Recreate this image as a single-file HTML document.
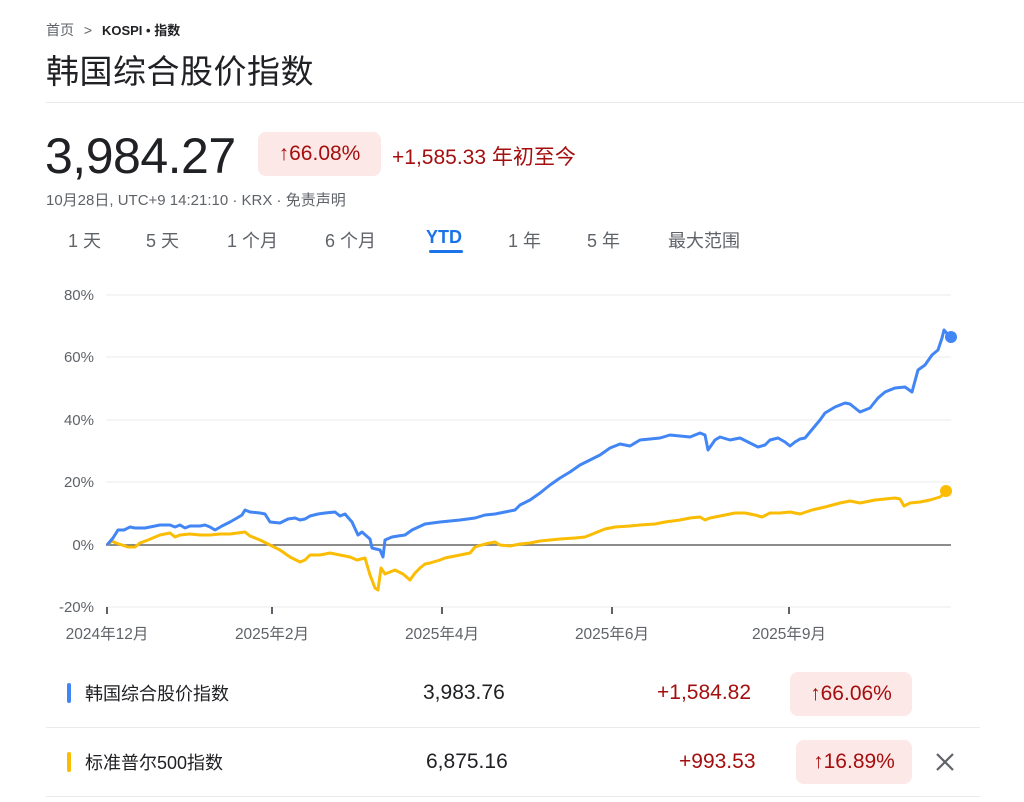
<!DOCTYPE html>
<html><head><meta charset="utf-8"><style>
*{margin:0;padding:0;box-sizing:border-box}
body{width:1024px;height:802px;background:#fff;position:relative;overflow:hidden;font-family:"Liberation Sans","Noto Sans CJK SC",sans-serif;color:#202124}
.a{position:absolute;white-space:nowrap}
.red{color:#a50e0e}
.pill{background:#fce8e6;border-radius:8px;color:#a50e0e}
.tab{position:absolute;top:227px;font-size:18px;color:#5f6368}
.hr{position:absolute;height:1px;background:#e8eaed}
</style></head><body>
<div class="a" style="left:46px;top:20px;font-size:14px;color:#5f6368">首页 <span style="margin:0 6px">&gt;</span> <b style="color:#202124;font-size:13px">KOSPI • 指数</b></div>
<div class="a" style="left:46px;top:45px;font-size:33px;letter-spacing:0.5px">韩国综合股价指数</div>
<div class="hr" style="left:46px;top:102px;width:978px"></div>
<div class="a" style="left:45px;top:127px;font-size:50px;letter-spacing:-0.5px">3,984.27</div>
<div class="a pill" style="left:258px;top:132px;width:123px;height:44px;font-size:21px;line-height:44px;text-align:center">↑66.08%</div>
<div class="a red" style="left:392px;top:141px;font-size:21px">+1,585.33 年初至今</div>
<div class="a" style="left:46px;top:189px;font-size:15px;color:#5f6368">10月28日, UTC+9 14:21:10 · KRX · 免责声明</div>
<div class="tab" style="left:68px">1 天</div>
<div class="tab" style="left:146px">5 天</div>
<div class="tab" style="left:227px">1 个月</div>
<div class="tab" style="left:325px">6 个月</div>
<div class="tab" style="left:426px;color:#1a73e8;font-weight:bold">YTD</div>
<div class="a" style="left:429px;top:250px;width:34px;height:3px;background:#1a73e8;border-radius:2px"></div>
<div class="tab" style="left:508px">1 年</div>
<div class="tab" style="left:587px">5 年</div>
<div class="tab" style="left:668px">最大范围</div>
<svg class="a" style="left:0;top:0" width="1024" height="660">
<g stroke="#f1f3f4" stroke-width="1.5">
<line x1="106" y1="295" x2="951" y2="295"/><line x1="106" y1="357" x2="951" y2="357"/><line x1="106" y1="420" x2="951" y2="420"/><line x1="106" y1="482" x2="951" y2="482"/><line x1="106" y1="607" x2="951" y2="607"/></g>
<line x1="106" y1="545" x2="951" y2="545" stroke="#666" stroke-width="1.5"/>
<g fill="#5f6368" font-size="15" text-anchor="end" font-family="Liberation Sans,sans-serif">
<text x="94" y="300">80%</text><text x="94" y="362">60%</text><text x="94" y="425">40%</text><text x="94" y="487">20%</text><text x="94" y="550">0%</text><text x="94" y="612">-20%</text></g>
<g stroke="#5f6368" stroke-width="2"><line x1="107" y1="607" x2="107" y2="614"/><line x1="272" y1="607" x2="272" y2="614"/><line x1="442" y1="607" x2="442" y2="614"/><line x1="612" y1="607" x2="612" y2="614"/><line x1="789" y1="607" x2="789" y2="614"/></g>
<g fill="#5f6368" font-size="15.5" text-anchor="middle" font-family="Liberation Sans,Noto Sans CJK SC,sans-serif">
<text x="107" y="639">2024年12月</text><text x="272" y="639">2025年2月</text><text x="442" y="639">2025年4月</text><text x="612" y="639">2025年6月</text><text x="789" y="639">2025年9月</text></g>
<polyline fill="none" stroke="#fbbc04" stroke-width="3" stroke-linejoin="round" points="107,545 112,541 116,543 122,545 128,547 135,547 140,543 148,540 160,535 170,533 175,537 180,535 190,534 200,535 210,535 220,534 230,534 245,532 250,536 260,540 270,545 280,550 290,557 300,562 305,560 310,555 320,555 330,553 340,555 350,557 357,560 365,558 370,575 375,588 378,590 381,568 385,574 390,572 395,570 403,574 410,580 415,573 420,568 425,564 430,563 440,560 445,558 460,555 470,553 475,547 485,544 495,542 500,545 510,546 520,544 530,543 540,541 550,540 560,539 575,538 585,537 595,533 605,529 615,527 630,526 640,525 655,524 665,522 680,520 690,518 700,517 705,520 710,518 720,516 735,513 745,513 755,515 762,517 770,513 780,513 790,512 800,514 812,510 825,507 840,503 850,501 860,503 875,500 885,499 895,498 900,499 904,506 910,503 920,502 930,500 940,497 946,492"/>
<polyline fill="none" stroke="#4285f4" stroke-width="3" stroke-linejoin="round" points="107,545 113,538 118,530 124,530 130,527 135,528 145,528 150,527 160,525 170,525 175,527 180,525 185,528 190,526 200,526 205,525 210,527 215,530 222,526 230,522 237,518 242,515 245,510 250,512 260,513 265,514 270,522 280,523 288,519 295,518 300,520 305,519 310,516 318,514 325,513 335,512 340,516 345,514 352,522 358,535 362,532 370,539 372,548 380,550 383,557 385,540 392,537 398,536 405,535 412,530 425,524 440,522 460,520 475,518 485,515 495,514 505,512 515,510 520,505 530,500 540,493 550,485 560,478 570,472 580,465 590,460 600,455 610,448 620,444 630,446 640,440 650,439 660,438 670,435 680,436 690,437 700,433 705,435 708,450 715,440 720,437 730,440 740,438 750,443 758,447 765,445 770,440 778,438 785,442 790,446 795,442 800,439 805,438 810,432 820,420 825,413 830,410 835,407 840,405 845,403 850,404 855,408 860,412 870,408 878,398 885,392 895,388 905,387 912,392 918,370 925,365 932,355 938,350 942,338 944,330 950,337"/>
<circle cx="951" cy="337" r="6" fill="#4285f4"/>
<circle cx="946" cy="491" r="6" fill="#fbbc04"/>
</svg>
<div class="a" style="left:67px;top:683px;width:4px;height:20px;background:#4285f4;border-radius:2px"></div>
<div class="a" style="left:85px;top:680px;font-size:18px">韩国综合股价指数</div>
<div class="a" style="left:423px;top:681px;font-size:21px">3,983.76</div>
<div class="a red" style="left:657px;top:681px;font-size:21px">+1,584.82</div>
<div class="a pill" style="left:790px;top:672px;width:122px;height:44px;font-size:21px;line-height:44px;text-align:center">↑66.06%</div>
<div class="hr" style="left:46px;top:727px;width:934px"></div>
<div class="a" style="left:67px;top:752px;width:4px;height:20px;background:#fbbc04;border-radius:2px"></div>
<div class="a" style="left:85px;top:749px;font-size:18px">标准普尔500指数</div>
<div class="a" style="left:426px;top:750px;font-size:21px">6,875.16</div>
<div class="a red" style="left:679px;top:750px;font-size:21px">+993.53</div>
<div class="a pill" style="left:796px;top:740px;width:116px;height:44px;font-size:21px;line-height:44px;text-align:center">↑16.89%</div>
<svg class="a" style="left:935px;top:752px" width="20" height="20"><path d="M2 2L18 18M18 2L2 18" stroke="#5f6368" stroke-width="2.2"/></svg>
<div class="hr" style="left:46px;top:796px;width:934px"></div>
</body></html>
